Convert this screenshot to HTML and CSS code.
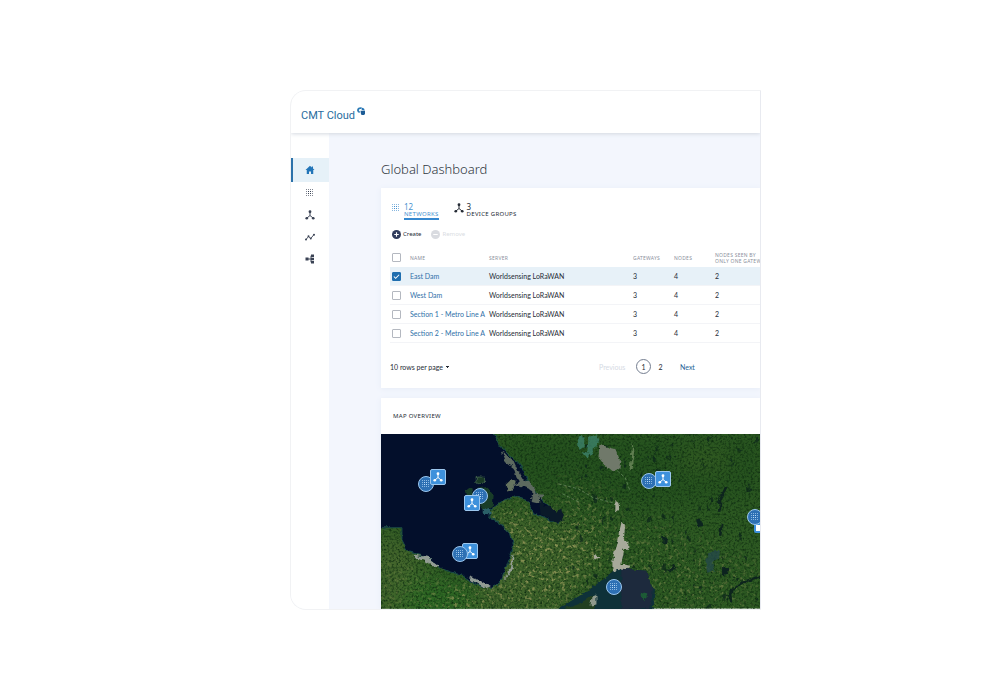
FILE: index.html
```html
<!DOCTYPE html>
<html lang="en">
<head>
<meta charset="utf-8">
<title>CMT Cloud - Global Dashboard</title>
<link rel="stylesheet" href="styles.css">
</head>
<body>
<svg class="defs" aria-hidden="true">
  <symbol id="dots" viewBox="0 0 10 10">
    <path d="M1 1.500h8M1 3.500h8M1 5.500h8M1 7.500h8" fill="none" stroke="currentColor" stroke-width="1" stroke-dasharray="1 1" opacity=".65"/>
    <path d="M3 3.500h4M3 5.500h4" fill="none" stroke="currentColor" stroke-width="1" stroke-dasharray="1 1"/>
  </symbol>
  <symbol id="hub" viewBox="0 0 20 20">
    <path d="M10 4v7M10 11l-6 5M10 11l6 5" fill="none" stroke="currentColor" stroke-width="2"/>
    <circle cx="10" cy="3.500" r="2.800" fill="currentColor"/>
    <circle cx="3.500" cy="16.500" r="2.700" fill="currentColor"/>
    <circle cx="16.500" cy="16.500" r="2.700" fill="currentColor"/>
  </symbol>
  <symbol id="tree" viewBox="0 0 20 20">
    <path d="M4 10h11M12 3.500v13M12 3.500h4M12 16.500h4" fill="none" stroke="currentColor" stroke-width="2"/>
    <path d="M1 7h6v6H1zM12 1h6v5h-6zM12 7.500h6v5h-6zM12 14h6v5h-6z" fill="currentColor"/>
  </symbol>
</svg>
<div class="app">
  <header class="topbar">
    <a class="logo" href="#">CMT Cloud
      <svg class="logo-mark" viewBox="0 0 16 16" aria-hidden="true">
        <path d="M9 2.500C5 1 1.500 4 2 7c.3 2 1.500 3 3.500 3.500" fill="none" stroke="#2f7cb5" stroke-width="3.500"/>
        <path d="M7 7.500h8.500A5 5 0 0 1 8 14.500z" fill="#1d5c96"/>
        <path d="M9 1l5 2 1.500 4-6-1z" fill="#2474b5"/>
      </svg>
    </a>
  </header>
  <div class="body">
    <nav class="sidebar" aria-label="Main">
      <a class="nav-item active" href="#" aria-label="Home"><svg viewBox="0 0 20 20"><path d="M10 1.500L1 10h2.500v8h4.500v-5h4v5h4.500v-8H19l-3-2.800V3h-2.500v1.800z" fill="currentColor"/></svg></a>
      <a class="nav-item" href="#" aria-label="Networks"><svg><use href="#dots"/></svg></a>
      <a class="nav-item" href="#" aria-label="Device groups"><svg><use href="#hub"/></svg></a>
      <a class="nav-item" href="#" aria-label="Data"><svg viewBox="0 0 20 20"><path d="M2 15l5-6 4.500 4L18 5" fill="none" stroke="currentColor" stroke-width="1.800"/><g fill="currentColor"><circle cx="2" cy="15" r="2"/><circle cx="7" cy="8.500" r="2"/><circle cx="11.500" cy="13" r="2"/><circle cx="18" cy="5.500" r="2"/></g></svg></a>
      <a class="nav-item" href="#" aria-label="Hierarchy"><svg><use href="#tree"/></svg></a>
    </nav>
    <main class="main">
      <h1 class="title">Global Dashboard</h1>
      <section class="card networks">
        <div class="tabs">
          <a class="tab selected" href="#"><svg><use href="#dots"/></svg><span class="tab-text"><span class="count">12</span><span class="tab-label">NETWORKS</span></span></a>
          <a class="tab" href="#"><svg><use href="#hub"/></svg><span class="tab-text"><span class="count">3</span><span class="tab-label">DEVICE GROUPS</span></span></a>
        </div>
        <div class="actions">
          <button class="action" type="button"><svg viewBox="0 0 20 20"><circle cx="10" cy="10" r="10" fill="#303c5c"/><path d="M10 5v10M5 10h10" stroke="#fff" stroke-width="2.500"/></svg>Create</button>
          <button class="action" type="button" disabled><svg viewBox="0 0 20 20"><circle cx="10" cy="10" r="10" fill="#d9dbe0"/><path d="M5 10h10" stroke="#fff" stroke-width="2.500"/></svg>Remove</button>
        </div>
        <table class="table">
          <thead>
            <tr><th class="c-check"><input type="checkbox" aria-label="Select all"></th><th class="c-name">NAME</th><th class="c-server">SERVER</th><th class="c-num">GATEWAYS</th><th class="c-num">NODES</th><th>NODES SEEN BY<br>ONLY ONE GATEW</th></tr>
          </thead>
          <tbody>
            <tr class="checked"><td><input type="checkbox" checked aria-label="Select East Dam"></td><td><a href="#">East Dam</a></td><td>Worldsensing LoRaWAN</td><td>3</td><td>4</td><td>2</td></tr>
            <tr><td><input type="checkbox" aria-label="Select West Dam"></td><td><a href="#">West Dam</a></td><td>Worldsensing LoRaWAN</td><td>3</td><td>4</td><td>2</td></tr>
            <tr><td><input type="checkbox" aria-label="Select Section 1"></td><td><a href="#">Section 1 - Metro Line A</a></td><td>Worldsensing LoRaWAN</td><td>3</td><td>4</td><td>2</td></tr>
            <tr><td><input type="checkbox" aria-label="Select Section 2"></td><td><a href="#">Section 2 - Metro Line A</a></td><td>Worldsensing LoRaWAN</td><td>3</td><td>4</td><td>2</td></tr>
          </tbody>
        </table>
        <div class="footer">
          <select class="rows" aria-label="Rows per page"><option>10 rows per page</option></select>
          <div class="pager">
            <button type="button" class="prev" disabled>Previous</button>
            <button type="button" class="page current">1</button>
            <button type="button" class="page">2</button>
            <button type="button" class="next">Next</button>
          </div>
        </div>
      </section>
      <section class="card overview">
        <h2 class="overview-title">MAP OVERVIEW</h2>
        <div class="map">
          <svg class="terrain" viewBox="0 0 380 175" preserveAspectRatio="xMinYMin slice" aria-label="Satellite map">
            <defs>
              <filter id="grain" x="0" y="0" width="100%" height="100%" color-interpolation-filters="sRGB">
                <feTurbulence type="fractalNoise" baseFrequency="0.45" numOctaves="4" seed="8"/>
                <feColorMatrix values="0 0 0 0 0.05  0 0 0 0 0.17  0 0 0 0 0.06  2 0 0 0 -0.850"/>
              </filter>
              <filter id="fields" x="0" y="0" width="100%" height="100%" color-interpolation-filters="sRGB">
                <feTurbulence type="fractalNoise" baseFrequency="0.27" numOctaves="4" seed="21"/>
                <feColorMatrix values="0 0 0 0 0.53  0 0 0 0 0.56  0 0 0 0 0.32  0 5 0 0 -2.800"/>
              </filter>
              <filter id="lakes" x="0" y="0" width="100%" height="100%" color-interpolation-filters="sRGB">
                <feTurbulence type="fractalNoise" baseFrequency="0.13 0.1" numOctaves="4" seed="5"/>
                <feColorMatrix values="0 0 0 0 0.04  0 0 0 0 0.14  0 0 0 0 0.10  0 0 12 0 -8.500"/>
              </filter>
              <filter id="rough" x="-10%" y="-10%" width="120%" height="120%" color-interpolation-filters="sRGB">
                <feTurbulence type="fractalNoise" baseFrequency="0.18" numOctaves="3" seed="3"/>
                <feDisplacementMap in="SourceGraphic" scale="5" xChannelSelector="R" yChannelSelector="G"/>
                <feGaussianBlur stdDeviation="0.300"/>
              </filter>
              <filter id="soft" x="-30%" y="-30%" width="160%" height="160%" color-interpolation-filters="sRGB"><feGaussianBlur stdDeviation="12"/></filter>
              <mask id="farm" maskUnits="userSpaceOnUse" x="0" y="0" width="380" height="175">
                <g filter="url(#soft)" fill="#fff">
                  <path d="M105 70L150 78 175 95 210 85 225 130 200 155 165 180H55V155L130 150z"/>
                  <path d="M-10 115L30 130 65 150 110 160V190H-10z" opacity=".35"/>
                  <path d="M225 105L270 85 380 130V180H270z" opacity=".5"/>
                  <path d="M175 40L240 60 230 100 180 90z" opacity=".5"/>
                </g>
              </mask>
            </defs>
            <rect width="380" height="175" fill="#2d5922"/>
            <g filter="url(#soft)">
              <path d="M105 0H380V60L240 75 150 60z" fill="#25511e"/>
              <path d="M-5 95L25 105 35 125 60 145-5 190z" fill="#45662d"/>
              <path d="M30 140L90 155 90 185H20z" fill="#2c6823"/>
              <path d="M110 75L195 90 220 120 180 180H90z" fill="#40642b"/>
              <path d="M300 15H350V35H300z" fill="#365d23"/>
            </g>
            <rect width="380" height="175" filter="url(#grain)"/>
            <g mask="url(#farm)"><rect width="380" height="175" filter="url(#fields)"/></g>
            <svg x="180" y="0" width="200" height="175"><rect width="200" height="175" filter="url(#lakes)" opacity=".7"/></svg>
            <g filter="url(#rough)">
              <path d="M-5 -5H111L118 10 129 22 139 30 146 45 156 60 168 72 179 82 178 90 165 84 153 79 147 67 132 62 118 70 110 76 108 83 121 91 130 101 133 112 127 130 122 143 116 152 110 155 96 151 80 141 68 138 57 133 50 126 41 122 27 118 21 106 21 94H-5z" fill="#030f2b" stroke="#1b4d48" stroke-width="1"/>
              <path d="M121 17l6 6 6 4 4 9 6 9 10 6 2 9 8 1-4 9-9-2 2-11-12-5-9 1 7-4-5-15-8-6z" fill="#5c695f"/>
              <path d="M130 46l4 2-1 7-5 4-3-8z" fill="#66745f"/>
              <path d="M33 121l13 2 12 9-2 2-12-7-11-3zM88 143l12 4 10 7-4 1-15-8zM131 125l2-6-1 15-9 14 6-14z" fill="#929c94"/>
              <path d="M94 47c1-5 9-5 10-1s-9 6-10 1z" fill="#193926" stroke="#3f5f4a"/>
              <path d="M85 57l5-4 2 8-5 6zM97 55l10-2 6 8-1 12-8 6-5-8z" fill="#193d28"/>
              <path d="M103 76l6-2 1 7-7-1z" fill="#2b6068"/>
              <path d="M158 62l6 10 7 0 5 6 5-2 2 11-8 3-7-6-8-3z" fill="#0a1a29"/>
              <path d="M197 6l3-4 4 3-1 8-4 3zM208 3l8-3 3 6-4 8-5 8-3-5zM202 18l8 2-3 4z" fill="#3f8570" opacity=".75"/>
              <path d="M219 10l8 3 8 2 5 12-1 8-8 2-8-7-5-7z" fill="#70796a"/>
              <path d="M252 8l2 9-2 12 1 5-4 4 1-10z" fill="#5f7d50"/>
              <path d="M235 67l3 2 1 6-4 3zM241 89l4 3-2 16h5v7h-5l-3 15 10 2-5 9-13-2v-12l3-13z" fill="#a7aa9a"/>
              <path d="M213 121l6 2-5 3z" fill="#a7aa9a"/>
              <path d="M173 178L208 157 232 138 241 135 266 137 269 151 275 155 272 178z" fill="#0e3139"/>
              <path d="M241 135l25 2 3 14 4 4-3 20h-29z" fill="#1d2a3d"/>
              <path d="M180 177l20-7 11-8 4 6-3 10z" fill="#213f20"/>
              <path d="M211 163l5-2v10l-6 1z" fill="#8e998c"/>
              <path d="M260 160l4-2 4 3-1 3-3 0-1 4z" fill="#1d5b36"/>
              <path d="M346 53l-3 7-4 7 2 2-2 9M342 90l-2 12M380 143l-17 5-7 6-6 5 1 9M294 132l-5 6" stroke="#0d241d" stroke-width="2.500" fill="none"/>
              <path d="M316 86l5-2 1 7-4 3zM282 103l5 1-1 6-4-1zM342 133l7 2-3 7-4-1z" fill="#0c231f"/>
              <path d="M325 126l6-8 9-1-1 7-7 5 3 8-8 2z" fill="#244948" opacity=".8"/>
            </g>
            <path d="M178 50l20 5 15 9 20 5M237 37l8 7 5 14M182 60l18 9" stroke="#8ca881" stroke-width="1" stroke-dasharray="3 2" fill="none" opacity=".5"/>
          </svg>
          <span class="pin network p1"><svg><use href="#dots"/></svg></span>
          <span class="pin group p2"><svg><use href="#hub"/></svg></span>
          <span class="pin network p3"><svg><use href="#dots"/></svg></span>
          <span class="pin group p4"><svg><use href="#hub"/></svg></span>
          <span class="pin group p5"><svg><use href="#hub"/></svg></span>
          <span class="pin network p6"><svg><use href="#dots"/></svg></span>
          <span class="pin network p7"><svg><use href="#dots"/></svg></span>
          <span class="pin group p8"><svg><use href="#hub"/></svg></span>
          <span class="pin network p9"><svg><use href="#dots"/></svg></span>
          <span class="pin group small p10"></span>
          <span class="pin network p11"><svg><use href="#dots"/></svg></span>
        </div>
      </section>
    </main>
  </div>
</div>
</body>
</html>
```
FILE: styles.css
```css
* { box-sizing: border-box; }
body {
  margin: 0;
  min-height: 100vh;
  padding: 90px 239px 90px 290px;
  background: #fff;
  font: 7px/10px Lato, "Noto Sans", sans-serif;
  color: #252b35;
}
a { color: #2f70a8; text-decoration: none; }
button, select, input { font: inherit; color: inherit; margin: 0; padding: 0; border: 0; background: none; }
.defs { position: absolute; width: 0; height: 0; }
.app {
  border: 1px solid #f1f2f4;
  border-right-color: #e8eaf0;
  border-radius: 16px 0 0 16px;
  overflow: hidden;
  display: flex;
  flex-direction: column;
}
.topbar {
  position: relative;
  height: 42px;
  padding: 16px 10px 0;
  background: #fff;
  box-shadow: 0 1px 4px #d3d8e0;
}
.logo { display: flex; gap: 2px; font: 11px/18px Roboto, sans-serif; color: #286c9e; }
.logo-mark { width: 8px; height: 8px; }
.body { display: flex; background: #f3f6fd; }
.sidebar { width: 38px; flex: none; padding-top: 25px; background: #fff; }
.nav-item { display: flex; align-items: center; justify-content: center; height: 22px; color: #3a4254; }
.nav-item svg { width: 10px; height: 10px; }
.nav-item.active { height: 24px; background: #e6f1f8; border-left: 2px solid #2c72aa; padding-right: 2px; color: #2275b8; }
.main { flex: 1; min-width: 0; padding: 27px 0 0 52px; }
.title { margin: 0 0 10px; font-family: "Noto Sans", sans-serif; font-size: 13px; line-height: 18px; font-weight: 300; color: #303640; }
.card { background: #fff; box-shadow: 0 1px 6px #e6ecf7; }
.networks { padding: 15px 0 14px 9px; margin-bottom: 10px; }
.tabs { display: flex; gap: 15px; padding-left: 1px; font-family: "Noto Sans", sans-serif; }
.tab { display: flex; gap: 3px; color: #252b35; }
.tab svg { width: 10px; height: 10px; }
.tab-text { display: flex; flex-direction: column; padding-bottom: 1px; border-bottom: 2px solid transparent; }
.count { font-size: 8px; line-height: 8px; }
.tab-label { font-size: 6px; line-height: 6px; letter-spacing: 0.05em; }
.selected { color: #4a92cf; }
.selected .tab-text { border-color: #3688cf; }
.actions { display: flex; gap: 10px; padding: 9px 0 0 2px; font-family: "Noto Sans", sans-serif; }
.action { display: flex; align-items: center; gap: 2px; height: 10px; font-size: 6px; }
.action svg { width: 9px; height: 9px; }
.action:disabled { color: #d9dce2; }
.table { width: 100%; margin-top: 9px; border-spacing: 0; table-layout: fixed; }
th, td { padding: 0; height: 19px; text-align: left; white-space: nowrap; }
th { font-family: "Noto Sans", sans-serif; font-size: 5px; line-height: 6px; font-weight: 400; letter-spacing: 0.05em; color: #8a8f9b; }
td { border-bottom: 1px solid #f3f4f7; }
.c-check { width: 20px; }
.c-name { width: 79px; }
.c-server { width: 144px; }
.c-num { width: 41px; }
.checked { background: #e7f1f8; }
input[type="checkbox"] {
  appearance: none;
  display: block;
  width: 9px;
  height: 9px;
  margin-left: 2px;
  border: 1px solid #b4b8c0;
  border-radius: 1px;
  background: #fff;
}
input[type="checkbox"]:checked {
  border-color: #1f6eaf;
  background: #1f6eaf url("data:image/svg+xml,%3Csvg xmlns='http://www.w3.org/2000/svg' viewBox='0 0 8 8'%3E%3Cpath d='M1 4l2 2 4-4' fill='none' stroke='white' stroke-width='1.2'/%3E%3C/svg%3E");
}
.footer { display: flex; align-items: center; margin-top: 16px; }
.rows {
  appearance: none;
  width: 60px;
  height: 10px;
  background: linear-gradient(to bottom right, #252b35 50%, transparent 50%) 58px 4px / 2px 2px no-repeat,
    linear-gradient(to bottom left, #252b35 50%, transparent 50%) 56px 4px / 2px 2px no-repeat;
}
.pager { display: flex; align-items: center; margin-left: 149px; }
.prev { width: 27px; margin-right: 10px; text-align: left; color: #d5dae4 !important; }
.page { width: 15px; height: 15px; margin-right: 2px; border-radius: 50%; text-align: center; }
.current { border: 1px solid #747e90; }
.next { margin-left: 10px; color: #245f96; }
.overview-title { margin: 0; padding: 13px 12px; font-family: "Noto Sans", sans-serif; font-size: 6px; line-height: 10px; font-weight: 400; letter-spacing: 0.05em; }
.map { position: relative; overflow: hidden; }
.terrain { display: block; width: 100%; height: auto; }
.pin {
  position: absolute;
  display: flex;
  align-items: center;
  justify-content: center;
  width: 16px;
  height: 16px;
  border: 1px solid #9cc7ee;
  color: #fff;
}
.pin svg { width: 10px; height: 10px; }
.network { border-radius: 50%; background: #2d70b4; color: #b9daf8; }
.group { border-radius: 2px; background: #3e91dc; }
.p1 { left: 37px; top: 42px; }
.p2 { left: 49px; top: 35px; }
.p3 { left: 91px; top: 54px; }
.p4 { left: 83px; top: 61px; }
.p5 { left: 81px; top: 109px; }
.p6 { left: 71px; top: 112px; }
.p7 { left: 260px; top: 39px; }
.p8 { left: 274px; top: 37px; }
.p9 { left: 366px; top: 75px; z-index: 1; }
.small { width: 12px; height: 10px; background: #fff; border: 2px solid #3e91dc; }
.p10 { left: 373px; top: 89px; }
.p11 { left: 225px; top: 145px; }
```
